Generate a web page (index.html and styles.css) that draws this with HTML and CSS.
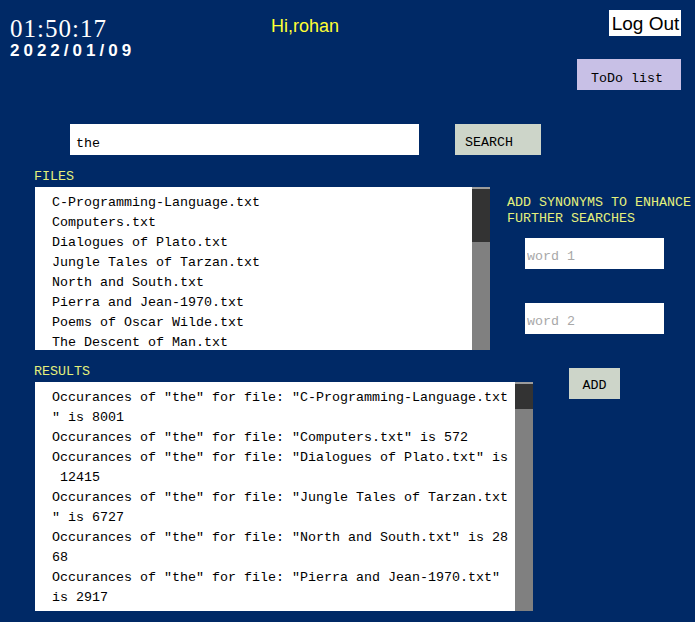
FILE: index.html
```html
<!DOCTYPE html>
<html lang="en">
<head>
<meta charset="utf-8">
<title>Search</title>
<link rel="stylesheet" href="styles.css">
</head>
<body>
<div class="page">
  <header class="header">
    <div class="clock">
      <div class="time">01:50:17</div>
      <div class="date">2022/01/09</div>
    </div>
    <div class="greet">Hi,rohan</div>
    <div class="actions">
      <button class="logout">Log Out</button>
      <button class="todo">ToDo list</button>
    </div>
  </header>

  <div class="search-row">
    <input class="search-input" type="text" value="the">
    <button class="btn search-btn">SEARCH</button>
  </div>

  <div class="row row-files">
    <div class="col">
      <div class="label">FILES</div>
      <div class="listbox files">
        <ul class="list">
          <li>C-Programming-Language.txt</li>
          <li>Computers.txt</li>
          <li>Dialogues of Plato.txt</li>
          <li>Jungle Tales of Tarzan.txt</li>
          <li>North and South.txt</li>
          <li>Pierra and Jean-1970.txt</li>
          <li>Poems of Oscar Wilde.txt</li>
          <li>The Descent of Man.txt</li>
          <li>The Iliad.txt</li>
          <li>The Jungle Book.txt</li>
          <li>The Odyssey.txt</li>
          <li>The Prince.txt</li>
        </ul>
        <div class="scrollbar"><div class="thumb"></div></div>
      </div>
    </div>
    <div class="synonyms">
      <div class="syn-title">ADD SYNONYMS TO ENHANCE<br>FURTHER SEARCHES</div>
      <input class="word word1" type="text" placeholder="word 1">
      <input class="word word2" type="text" placeholder="word 2">
    </div>
  </div>

  <div class="row row-results">
    <div class="col">
      <div class="label">RESULTS</div>
      <div class="listbox results">
        <ul class="list">
          <li>Occurances of "the" for file: "C-Programming-Language.txt" is 8001</li>
          <li>Occurances of "the" for file: "Computers.txt" is 572</li>
          <li>Occurances of "the" for file: "Dialogues of Plato.txt" is 12415</li>
          <li>Occurances of "the" for file: "Jungle Tales of Tarzan.txt" is 6727</li>
          <li>Occurances of "the" for file: "North and South.txt" is 2868</li>
          <li>Occurances of "the" for file: "Pierra and Jean-1970.txt" is 2917</li>
          <li>Occurances of "the" for file: "Poems of Oscar Wilde.txt" is 2611</li>
          <li>Occurances of "the" for file: "The Descent of Man.txt" is 19437</li>
        </ul>
        <div class="scrollbar"><div class="thumb"></div></div>
      </div>
    </div>
    <button class="btn add-btn">ADD</button>
  </div>
</div>
</body>
</html>
```

FILE: styles.css
```css
* { box-sizing: border-box; }

html, body {
  margin: 0;
  padding: 0;
  background: #002966;
}

body {
  width: 695px;
  height: 622px;
  overflow: hidden;
  font-family: "Liberation Mono", "DejaVu Sans Mono", monospace;
  font-size: 13.333px;
}

.page {
  display: flex;
  flex-direction: column;
}

/* Header */
.header {
  display: grid;
  grid-template-columns: 261px 1fr auto;
  padding: 10px 14px 0 10px;
  align-items: start;
}

.clock {
  margin-top: 6px;
  color: #ffffff;
}

.time {
  font-family: "Liberation Serif", "Times New Roman", serif;
  font-size: 25px;
  line-height: 25px;
  letter-spacing: 1px;
}

.date {
  margin-top: 1px;
  font-family: "Liberation Sans", Arial, sans-serif;
  font-weight: bold;
  font-size: 17px;
  line-height: 17px;
  letter-spacing: 4px;
}

.greet {
  margin-top: 6px;
  font-family: "Liberation Sans", Arial, sans-serif;
  font-size: 18px;
  line-height: 21px;
  color: #ffff33;
}

.actions {
  display: flex;
  flex-direction: column;
  align-items: flex-end;
  gap: 23px;
}

.logout {
  width: 72px;
  height: 26px;
  margin: 0;
  padding: 2px 0 0 1px;
  border: none;
  background: #ffffff;
  color: #000000;
  font-family: "Liberation Sans", Arial, sans-serif;
  font-size: 19px;
  line-height: 24px;
  text-align: center;
}

.todo {
  width: 104px;
  height: 31px;
  margin: 0;
  padding: 7px 0 0 14px;
  border: none;
  background: #c8c0e6;
  color: #000000;
  font-family: "Liberation Mono", "DejaVu Sans Mono", monospace;
  font-size: 13.333px;
  text-align: left;
}

/* Search */
.search-row {
  display: flex;
  gap: 36px;
  margin-top: 34px;
  padding-left: 70px;
}

.search-input {
  width: 349px;
  height: 31px;
  margin: 0;
  padding: 8px 6px 0 6px;
  border: none;
  outline: none;
  background: #ffffff;
  color: #000000;
  font-family: "Liberation Mono", "DejaVu Sans Mono", monospace;
  font-size: 13.333px;
}

.btn {
  margin: 0;
  border: none;
  background: #cdd5c9;
  color: #000000;
  font-family: "Liberation Mono", "DejaVu Sans Mono", monospace;
  font-size: 13.333px;
}

.search-btn {
  width: 86px;
  height: 31px;
  padding: 6px 0 0 10px;
  text-align: left;
}

/* Rows */
.row {
  display: flex;
  align-items: flex-start;
  padding-left: 34px;
}

.row-files { margin-top: 12px; }
.row-results { margin-top: 12px; }

.col {
  display: flex;
  flex-direction: column;
  gap: 2px;
}

.label {
  color: #e4f07c;
  height: 18px;
  padding-top: 2px;
  line-height: 16px;
}

.listbox {
  display: flex;
  margin-left: 1px;
  background: #ffffff;
  overflow: hidden;
}

.list {
  flex: 1;
  list-style: none;
  margin: 0;
  padding: 6px 0 0 17px;
  color: #000000;
  line-height: 20px;
  overflow: hidden;
}

.files {
  width: 455px;
  height: 163px;
}

.files .list li {
  white-space: nowrap;
}

.results {
  width: 498px;
  height: 229px;
}

.results .list li {
  white-space: break-spaces;
  line-break: anywhere;
}

.scrollbar {
  flex: 0 0 18px;
  background: #808080;
  border-top: 2px solid #9c9c9c;
}

.thumb {
  background: #333333;
}

.files .thumb { height: 53px; }
.results .thumb { height: 25px; }

/* Synonyms */
.synonyms {
  display: flex;
  flex-direction: column;
  align-items: flex-start;
  margin-left: 17px;
  margin-top: 28px;
}

.syn-title {
  color: #e4f07c;
  line-height: 16px;
  white-space: nowrap;
}

.word {
  width: 139px;
  height: 31px;
  margin: 0 0 0 18px;
  padding: 5px 2px 0 2px;
  border: none;
  outline: none;
  background: #ffffff;
  font-family: "Liberation Mono", "DejaVu Sans Mono", monospace;
  font-size: 13.333px;
  color: #000000;
}

.word::placeholder {
  color: #a8a8a8;
}

.word1 { margin-top: 11px; }
.word2 { margin-top: 34px; }

.add-btn {
  width: 51px;
  height: 31px;
  margin-left: 36px;
  margin-top: 6px;
  padding: 3px 0 0 0;
  text-align: center;
}
```
